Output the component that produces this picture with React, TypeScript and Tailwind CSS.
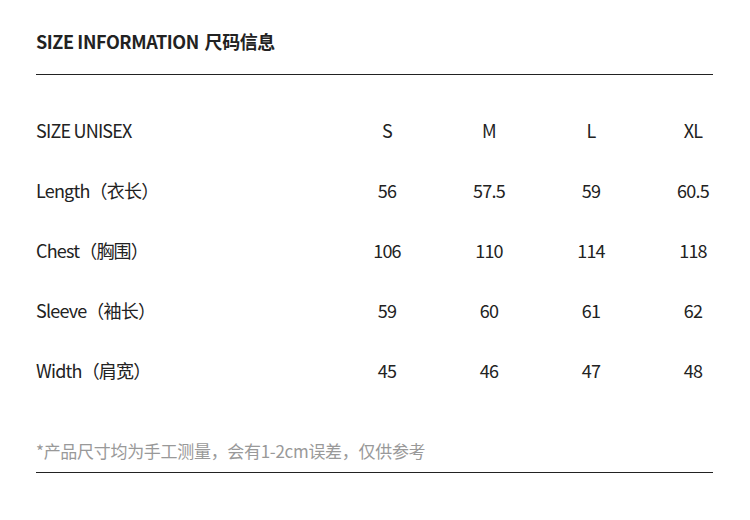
import React from "react";

const sizes = ["S", "M", "L", "XL"];

const rows: { label: string; values: string[] }[] = [
  { label: "Length（衣长）", values: ["56", "57.5", "59", "60.5"] },
  { label: "Chest（胸围）", values: ["106", "110", "114", "118"] },
  { label: "Sleeve（袖长）", values: ["59", "60", "61", "62"] },
  { label: "Width（肩宽）", values: ["45", "46", "47", "48"] },
];

const font = { fontFamily: '"Noto Sans CJK SC", "Noto Sans", sans-serif' };

export default function App() {
  return (
    <div className="w-[750px] h-[520px] bg-white text-[#222]" style={font}>
      <div className="ml-[36px] w-[677px]">
        {/* header */}
        <div className="pt-[29px] pb-[20px] border-b border-[#222]">
          <h2 className="text-[18px] font-bold leading-[25px] tracking-[-0.4px]">
            SIZE INFORMATION <span className="ml-[2px]">尺码信息</span>
          </h2>
        </div>

        {/* table */}
        <div className="pt-[25px] pb-[39px]">
          <div className="grid grid-cols-[300px_102px_102px_102px_102px] h-[60px] items-center text-[18px] tracking-[-0.8px]">
            <span>SIZE UNISEX</span>
            {sizes.map((s) => (
              <span key={s} className="text-center">{s}</span>
            ))}
          </div>
          {rows.map((row) => (
            <div
              key={row.label}
              className="grid grid-cols-[300px_102px_102px_102px_102px] h-[60px] items-center text-[18px] tracking-[-0.8px]"
            >
              <span>{row.label}</span>
              {row.values.map((v, i) => (
                <span key={i} className="text-center">{v}</span>
              ))}
            </div>
          ))}
        </div>

        {/* footnote */}
        <div className="pb-[9px] border-b border-[#222]">
          <p className="text-[17px] text-[#999] leading-[24px] tracking-[-0.3px]">
            *产品尺寸均为手工测量，会有1-2cm误差，仅供参考
          </p>
        </div>
      </div>
    </div>
  );
}
